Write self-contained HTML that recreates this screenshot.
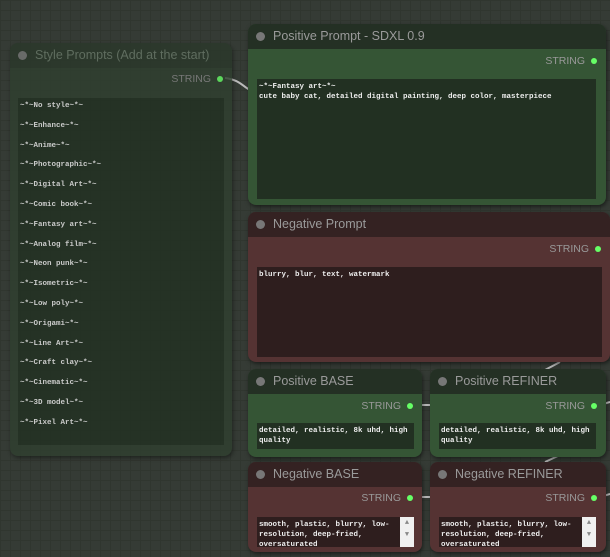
<!DOCTYPE html>
<html><head><style>
body{margin:0;width:610px;height:557px;overflow:hidden;position:relative;font-family:"Liberation Sans",sans-serif;
background-color:#353b35;background-image:linear-gradient(#30362f 1px,transparent 1px),linear-gradient(90deg,#30362f 1px,transparent 1px);background-size:10px 10px;}
.n{position:absolute;border-radius:8px;overflow:hidden;box-shadow:1px 2px 4px rgba(0,0,0,.5)}
.t{height:25px;line-height:25px;color:#9a9a9a;font-size:12.5px;padding-left:25px;position:relative}
.t:before{content:"";position:absolute;left:8px;top:8px;width:9px;height:9px;border-radius:50%;background:#777}
.s{position:absolute;right:9px;color:#999;font-size:10.5px}
.s:after{content:"";display:inline-block;width:6px;height:6px;border-radius:50%;background:#6f6;margin-left:6px;vertical-align:0}
.ta{position:absolute;font-family:"Liberation Mono",monospace;font-size:7.5px;font-weight:bold;color:#eee;line-height:10px;padding:3px 2px;box-sizing:border-box}
.g .t{background:#243024}.g{background:#355535}.g .ta{background:#223022}
.r .t{background:#342222}.r{background:#553333}.r .ta{background:#2e1e1e}
.sb{position:absolute;right:0;top:0;width:14px;height:100%;background:#f0f0f0;font-size:7px;color:#888;text-align:center;line-height:12px}
</style></head><body>
<svg style="position:absolute;left:0;top:0" width="610" height="557">
<path d="M225 78 C240 80,242 86,250 90" stroke="#bbb" stroke-width="2" fill="none"/>
<path d="M545 370 L560 362 M545 462 L560 455 M600 405 L610 402 M600 497 L610 494 M420 405 L432 405 M420 497 L432 497" stroke="#bbb" stroke-width="2" fill="none"/>
</svg>
<div class="n" style="left:10px;top:43px;width:222px;height:413px;background:#2f3f2f;opacity:.8">
<div class="t" style="background:#2b382b;color:#6a7a6a">Style Prompts (Add at the start)</div>
<div class="s" style="top:30px;color:#888">STRING</div>
<div class="ta" style="left:8px;top:55px;width:206px;height:347px;background:#223022;padding:0 2px"><div style="position:relative;top:-1px;line-height:19.8px">~*~No style~*~<br>~*~Enhance~*~<br>~*~Anime~*~<br>~*~Photographic~*~<br>~*~Digital Art~*~<br>~*~Comic book~*~<br>~*~Fantasy art~*~<br>~*~Analog film~*~<br>~*~Neon punk~*~<br>~*~Isometric~*~<br>~*~Low poly~*~<br>~*~Origami~*~<br>~*~Line Art~*~<br>~*~Craft clay~*~<br>~*~Cinematic~*~<br>~*~3D model~*~<br>~*~Pixel Art~*~</div></div>
</div>
<div class="n g" style="left:248px;top:24px;width:358px;height:181px">
<div class="t">Positive Prompt - SDXL 0.9</div>
<div class="s" style="top:31px">STRING</div>
<div class="ta" style="left:9px;top:55px;width:339px;height:120px">~*~Fantasy art~*~<br>cute baby cat, detailed digital painting, deep color, masterpiece</div>
</div>
<div class="n r" style="left:248px;top:212px;width:362px;height:150px">
<div class="t">Negative Prompt</div>
<div class="s" style="top:31px">STRING</div>
<div class="ta" style="left:9px;top:55px;width:345px;height:90px">blurry, blur, text, watermark</div>
</div>
<div class="n g" style="left:248px;top:369px;width:174px;height:88px">
<div class="t">Positive BASE</div>
<div class="s" style="top:31px">STRING</div>
<div class="ta" style="left:9px;top:54px;width:157px;height:26px">detailed, realistic, 8k uhd, high quality</div>
</div>
<div class="n g" style="left:430px;top:369px;width:176px;height:88px">
<div class="t">Positive REFINER</div>
<div class="s" style="top:31px">STRING</div>
<div class="ta" style="left:9px;top:54px;width:157px;height:26px">detailed, realistic, 8k uhd, high quality</div>
</div>
<div class="n r" style="left:248px;top:462px;width:174px;height:90px">
<div class="t">Negative BASE</div>
<div class="s" style="top:30px">STRING</div>
<div class="ta" style="left:9px;top:55px;width:157px;height:30px;padding-right:16px">smooth, plastic, blurry, low-resolution, deep-fried, oversaturated<div class="sb">▲<br>▼</div></div>
</div>
<div class="n r" style="left:430px;top:462px;width:176px;height:90px">
<div class="t">Negative REFINER</div>
<div class="s" style="top:30px">STRING</div>
<div class="ta" style="left:9px;top:55px;width:157px;height:30px;padding-right:16px">smooth, plastic, blurry, low-resolution, deep-fried, oversaturated<div class="sb">▲<br>▼</div></div>
</div>
</body></html>
